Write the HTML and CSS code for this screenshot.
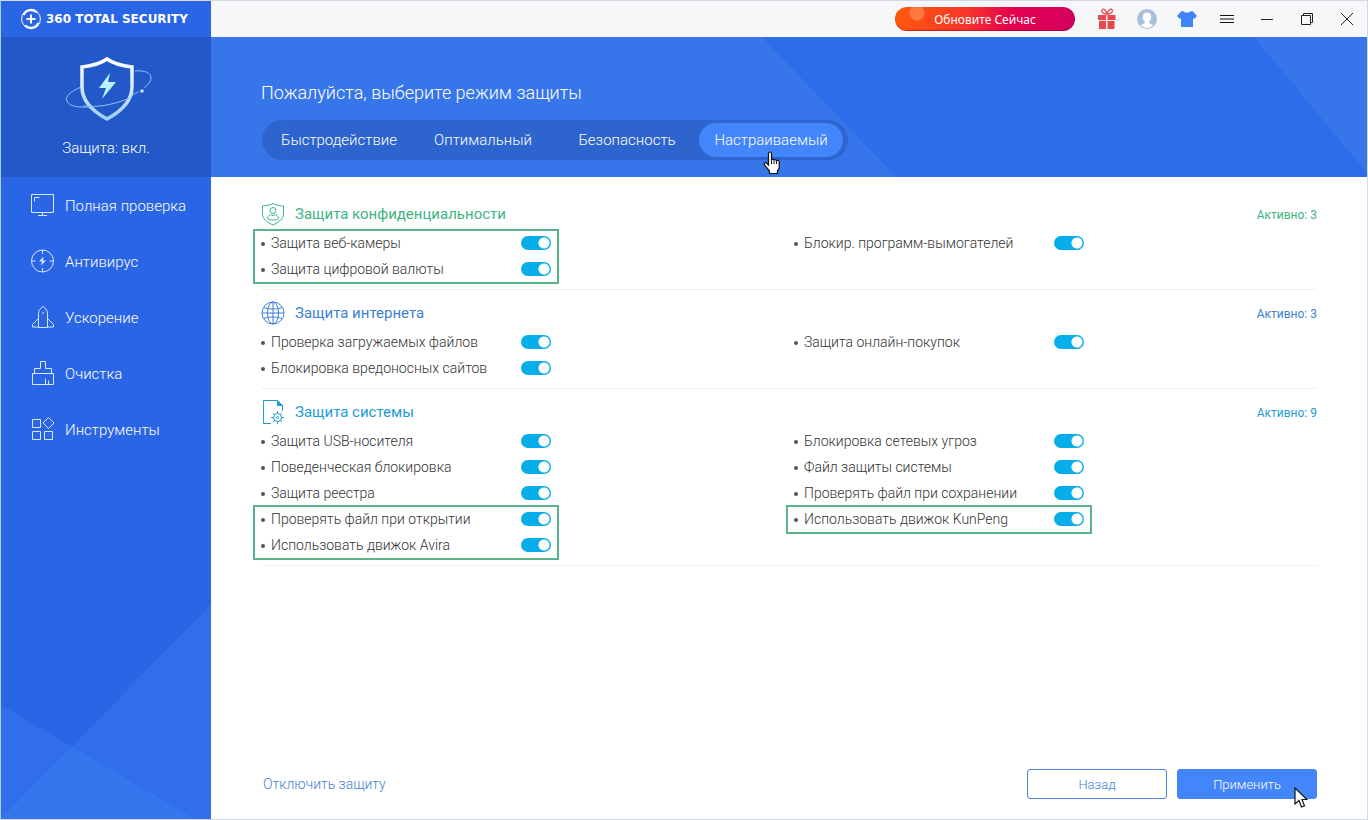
FILE: index.html
```html
<!DOCTYPE html>
<html lang="ru">

<head>
    <meta charset="UTF-8">
    <meta name="viewport" content="width=device-width, initial-scale=1.0">
    <title>360 Total Security</title>
    <link rel="stylesheet" href="styles.css">
</head>

<body>
    <div class="window">
        <aside class="sidebar">
            <div class="brand">
                <svg width="22" height="22" viewBox="0 0 22 22" fill="none" stroke="#fff">
                    <circle cx="11" cy="11" r="9.400" stroke-width="1" />
                    <path d="M3.500 7C6 1.500 13 .5 17 4.500M18.500 15C16 20.500 9 21.500 5 17.500" stroke-width="2.400" />
                    <path d="M11 6.500v9M6.500 11h9" stroke-width="2" />
                </svg>
                <span>360 TOTAL SECURITY</span>
            </div>

            <div class="status">
                <svg width="88" height="68" viewBox="0 0 88 68" fill="none">
                    <defs>
                        <linearGradient id="shieldFill" x1="0" y1="0" x2="0" y2="1">
                            <stop offset="0" stop-color="#ffffff" />
                            <stop offset="1" stop-color="#9fd0ff" />
                        </linearGradient>
                    </defs>
                    <path d="M16 34C5 39 0 43 2 48c3 8 24 8 47 1 20-6 37-16 37-24 0-5-6-8-16-7" stroke="#8fc0fa" stroke-width="1" />
                    <path d="M42 6c7 5 16 7 25 8v20c0 15-12 25-25 32C29 59 17 49 17 34V14c9-1 18-3 25-8z" fill="#2358c9" stroke="url(#shieldFill)" stroke-width="3.500" />
                    <path d="M18 53c18 2 36-3 49-9" stroke="#8fc0fa" stroke-width="1" />
                    <path d="M45 20 34 35h7l-4 11 14-17h-8z" fill="#b9f3ff" />
                    <circle cx="77" cy="38" r="3.500" fill="#2358c9" />
                    <circle cx="77" cy="38" r="1.800" fill="#b9e4ff" />
                </svg>
                <div class="status-text">Защита: вкл.</div>
            </div>

            <nav class="menu">
                <a href="#">
                    <svg class="menu-icon" viewBox="0 0 24 24">
                        <path d="M1.500 1.500h22v18h-22zM4.500 8.500v-4h5M12.500 20v2.500M8 22.500h9" />
                    </svg>
                    <span>Полная проверка</span>
                </a>
                <a href="#">
                    <svg class="menu-icon" viewBox="0 0 24 24">
                        <circle cx="12.500" cy="12" r="11" />
                        <path d="M12.500 1v4M12.500 19v4M1.500 12h4M19.500 12h4" />
                        <path d="M13.500 7.500 9 12.500h3l-1 4 5-5h-3z" fill="#d5e9ff" stroke="none" />
                    </svg>
                    <span>Антивирус</span>
                </a>
                <a href="#">
                    <svg class="menu-icon" viewBox="0 0 24 24">
                        <path d="M8.500 22.500V8.500c0-3 2-5.500 4.500-7 2.500 1.500 4.500 4 4.500 7v14zM8.500 13.500l-6 6v2.500h6M17.500 13.500l6 6v2.500h-6M13 7v2" />
                    </svg>
                    <span>Ускорение</span>
                </a>
                <a href="#">
                    <svg class="menu-icon" viewBox="0 0 24 24">
                        <path d="M2.500 12.500h21v11h-21zM4.500 12.500v-5h6v-7h5v7h6v5M15.500 23.500v-6M18.500 23.500v-4" />
                    </svg>
                    <span>Очистка</span>
                </a>
                <a href="#">
                    <svg class="menu-icon" viewBox="0 0 24 24">
                        <path d="M2.500 2.500h8v8h-8zM2.500 14.500h8v8h-8zM14.500 14.500h8v8h-8zM18.500 .5l5.500 5.500-5.500 5.500L13 6z" />
                    </svg>
                    <span>Инструменты</span>
                </a>
            </nav>

            <svg class="sidebar-bg" width="210" height="220" viewBox="0 0 210 220">
                <path d="M0 220 210 5v215z" />
                <path d="M0 106 194 220H0z" />
            </svg>
        </aside>

        <div class="main">
            <header class="titlebar">
                <button type="button" class="upgrade">Обновите Сейчас</button>
                <button type="button" class="tool" aria-label="Подарок">
                    <svg width="20" height="22" viewBox="0 0 20 22">
                        <path d="M1 7h8v5H1zM10.500 7h8v5h-8zM2 13h7v8H2zM10.500 13h7v8h-7z" fill="#e8474c" />
                        <path d="M10 6C5 6 4 3 5.500 1.500 7.500 0 9 3 10 6c1-3 3-6 5-4.500C16 3 15 6 10 6z" fill="none" stroke="#e8474c" stroke-width="1.300" />
                    </svg>
                </button>
                <button type="button" class="tool" aria-label="Профиль">
                    <svg width="20" height="20" viewBox="0 0 20 20">
                        <circle cx="10" cy="10" r="10" fill="#a9bfdb" />
                        <path d="M10 3.500c3 0 4.200 2 4.200 4.500 0 2-.8 3.500-2 4.500v1.500l4 2C14.500 18 12.500 19 10 19s-4.500-1-6.200-3l4-2v-1.500c-1.200-1-2-2.500-2-4.500 0-2.500 1.200-4.500 4.200-4.500z" fill="#fff" />
                    </svg>
                </button>
                <button type="button" class="tool" aria-label="Темы">
                    <svg width="20" height="18" viewBox="0 0 20 18">
                        <path d="M6 1c1.500 2 6.500 2 8 0l2 .5L20 6l-3 3-1-.8V17H4V8.200L3 9 0 6l4-4.500z" fill="#3f84fb" />
                    </svg>
                </button>
                <button type="button" class="tool" aria-label="Меню">
                    <svg width="14" height="8" viewBox="0 0 14 8"><path d="M0 .5h14M0 4h14M0 7.500h14" stroke="#111" /></svg>
                </button>
                <button type="button" class="tool" aria-label="Свернуть">
                    <svg width="12" height="2" viewBox="0 0 12 2"><path d="M0 1.500h12" stroke="#222" /></svg>
                </button>
                <button type="button" class="tool" aria-label="Развернуть">
                    <svg width="12" height="12" viewBox="0 0 12 12" fill="none" stroke="#222">
                        <path d="M.5 2.500h9v9h-9zM2.500 2.500v-2h9v9h-2" />
                    </svg>
                </button>
                <button type="button" class="tool" aria-label="Закрыть">
                    <svg width="12" height="12" viewBox="0 0 12 12"><path d="M0 0 12 12M12 0 0 12" stroke="#222" /></svg>
                </button>
            </header>

            <section class="banner">
                <svg class="banner-bg" viewBox="0 0 1156 140" preserveAspectRatio="none">
                    <path d="M551 0 685 140h471v-4L1043 0z" />
                </svg>
                <h1>Пожалуйста, выберите режим защиты</h1>
                <div class="modes">
                    <button type="button">Быстродействие</button>
                    <button type="button">Оптимальный</button>
                    <button type="button">Безопасность</button>
                    <button type="button" class="active">
                        Настраиваемый
                        <svg class="hand" width="18" height="24" viewBox="0 0 18 24">
                            <path d="M5.500 14V2.500c0-2 3-2 3 0V9c.5-1.300 2.500-1 2.500.5.500-1.200 2.500-1 2.500.5.700-1 2.700-.7 2.700 1V17l-1.700 3v2.500h-8V20L1.500 14c-1-2 1-3.500 2.500-1.500z" fill="#fff" stroke="#111" stroke-width="1.200" />
                            <path d="M8.500 9v4M11 10v3M13.500 10.500V13" stroke="#111" stroke-width="1" />
                        </svg>
                    </button>
                </div>
            </section>

            <main class="content">
                <section class="group privacy">
                    <div class="group-head">
                        <svg class="group-icon" viewBox="0 0 24 24">
                            <path d="M12 1.500c3 2 7 2 10.500 2.500v8c0 5-5 8.500-10.500 11C6.500 20.500 1.500 17 1.500 12V4C5 3.500 9 3.500 12 1.500z" />
                            <circle cx="12" cy="8.500" r="3" />
                            <path d="M9.500 12.500c-5 3-4 5.500 2.500 5.500s7.500-2.500 2.500-5.500c-1.500 1.300-3.500 1.300-5 0z" />
                        </svg>
                        <h2>Защита конфиденциальности</h2>
                        <span class="count">Активно: 3</span>
                    </div>
                    <div class="columns">
                        <ul>
                            <li class="marked">
                                <label><span>Защита веб-камеры</span><input type="checkbox" checked></label>
                                <label><span>Защита цифровой валюты</span><input type="checkbox" checked></label>
                            </li>
                        </ul>
                        <ul>
                            <li><label><span>Блокир. программ-вымогателей</span><input type="checkbox" checked></label></li>
                        </ul>
                    </div>
                </section>

                <section class="group internet">
                    <div class="group-head">
                        <svg class="group-icon" viewBox="0 0 24 24">
                            <circle cx="12" cy="12" r="11" />
                            <ellipse cx="12" cy="12" rx="5.500" ry="11" />
                            <path d="M12 1v22M1 12h22M3 6.500c5 2 13 2 18 0M3 17.500c5-2 13-2 18 0" />
                        </svg>
                        <h2>Защита интернета</h2>
                        <span class="count">Активно: 3</span>
                    </div>
                    <div class="columns">
                        <ul>
                            <li><label><span>Проверка загружаемых файлов</span><input type="checkbox" checked></label></li>
                            <li><label><span>Блокировка вредоносных сайтов</span><input type="checkbox" checked></label></li>
                        </ul>
                        <ul>
                            <li><label><span>Защита онлайн-покупок</span><input type="checkbox" checked></label></li>
                        </ul>
                    </div>
                </section>

                <section class="group system">
                    <div class="group-head">
                        <svg class="group-icon" viewBox="0 0 24 24">
                            <path d="M10 23.500H2.500V.5h14l5 5V11" />
                            <path d="M16.500 .5v5h5z" fill="currentColor" />
                            <circle cx="16.500" cy="17.500" r="4" />
                            <circle cx="16.500" cy="17.500" r="1" />
                            <path d="M16.500 11v2.500M16.500 21.500V24M10 17.500h2.500M20.500 17.500H23M12 13l1.700 1.700M19.300 20.300 21 22M12 22l1.700-1.700M19.300 14.700 21 13" />
                        </svg>
                        <h2>Защита системы</h2>
                        <span class="count">Активно: 9</span>
                    </div>
                    <div class="columns">
                        <ul>
                            <li><label><span>Защита USB-носителя</span><input type="checkbox" checked></label></li>
                            <li><label><span>Поведенческая блокировка</span><input type="checkbox" checked></label></li>
                            <li><label><span>Защита реестра</span><input type="checkbox" checked></label></li>
                            <li class="marked">
                                <label><span>Проверять файл при открытии</span><input type="checkbox" checked></label>
                                <label><span>Использовать движок Avira</span><input type="checkbox" checked></label>
                            </li>
                        </ul>
                        <ul>
                            <li><label><span>Блокировка сетевых угроз</span><input type="checkbox" checked></label></li>
                            <li><label><span>Файл защиты системы</span><input type="checkbox" checked></label></li>
                            <li><label><span>Проверять файл при сохранении</span><input type="checkbox" checked></label></li>
                            <li class="marked"><label><span>Использовать движок KunPeng</span><input type="checkbox" checked></label></li>
                        </ul>
                    </div>
                </section>
            </main>

            <footer class="footer">
                <a href="#" class="disable">Отключить защиту</a>
                <button type="button" class="btn">Назад</button>
                <button type="button" class="btn btn-primary">
                    Применить
                    <svg class="arrow" width="14" height="22" viewBox="0 0 14 22">
                        <path d="M1 1v16l4-3.500 2.500 6.500 3-1.200L8 12.500h5z" fill="#fff" stroke="#111" stroke-width="1.200" />
                    </svg>
                </button>
            </footer>
        </div>
    </div>
</body>

</html>
```
FILE: styles.css
```css
* {
    box-sizing: border-box;
}

body {
    margin: 0;
    font-family: Roboto, "Liberation Sans", sans-serif;
    font-size: 14px;
    font-weight: 300;
    color: #333;
}

button {
    padding: 0;
    border: none;
    background: none;
    font-family: inherit;
    font-weight: inherit;
    cursor: pointer;
}

a {
    text-decoration: none;
}

.window {
    display: grid;
    grid-template-columns: 210px 1fr;
    min-height: 100vh;
    border: 1px solid #d5d9dd;
    border-left-color: #a9cdf3;
    background-color: #fff;
}

/* sidebar */
.sidebar {
    position: relative;
    background-color: #2965e4;
    color: #fff;
}

.brand {
    display: flex;
    align-items: center;
    gap: 4px;
    height: 36px;
    padding-left: 19px;
    font-family: "DejaVu Sans", sans-serif;
    font-size: 12px;
    font-weight: bold;
    white-space: nowrap;
}

.status {
    display: flex;
    flex-direction: column;
    align-items: center;
    height: 140px;
    padding-top: 16px;
    background-color: #2358c9;
}

.status svg {
    margin-left: 6px;
}

.status-text {
    margin-top: 17px;
    font-size: 15px;
    line-height: 20px;
}

.menu a {
    display: flex;
    align-items: center;
    gap: 11px;
    height: 56px;
    padding-left: 29px;
    color: #fff;
    font-size: 15px;
}

.menu span {
    padding-top: 2px;
}

.menu-icon {
    width: 24px;
    height: 24px;
    fill: none;
    stroke: #d5e9ff;
}

.sidebar-bg {
    position: absolute;
    left: 0;
    bottom: 0;
    fill: #4a90ff;
    fill-opacity: 0.22;
}

/* title bar */
.main {
    display: flex;
    flex-direction: column;
}

.titlebar {
    display: flex;
    align-items: center;
    justify-content: flex-end;
    height: 36px;
    background-color: #f6f7f8;
}

.upgrade {
    width: 180px;
    height: 24px;
    margin-right: 12px;
    border-radius: 12px;
    background: radial-gradient(circle at 22px 6px, #ff7a3c 7px, transparent 8px),
        linear-gradient(100deg, #ff5a0a, #f6352a 40%, #e6004f 65%, #d2005f);
    box-shadow: inset 0 -1px 1px rgba(120, 0, 40, 0.5);
    color: #fff;
    font-family: "Noto Sans", sans-serif;
    font-size: 12px;
    font-weight: normal;
}

.tool {
    display: flex;
    align-items: center;
    justify-content: center;
    width: 40px;
    height: 36px;
}

/* banner */
.banner {
    position: relative;
    height: 140px;
    padding: 46px 50px 0;
    background-color: #3776ea;
    color: #fff;
}

.banner-bg {
    position: absolute;
    top: 0;
    left: 0;
    width: 100%;
    height: 100%;
    fill: #2d6de9;
}

.banner h1 {
    position: relative;
    margin: 0;
    font-size: 18px;
    font-weight: 300;
    line-height: 20px;
}

.modes {
    position: relative;
    display: inline-flex;
    margin: 17px 0 0 1px;
    padding: 3px 5px;
    border-radius: 20px;
    background-color: #2e64cd;
}

.modes button {
    position: relative;
    width: 144px;
    height: 34px;
    border-radius: 17px;
    color: #fff;
    font-size: 15px;
}

.modes .active {
    background-color: #4385fb;
}

.hand {
    position: absolute;
    left: 64px;
    top: 28px;
}

/* protection groups */
.content {
    flex: 1;
    padding: 14px 50px 0;
}

.group {
    padding: 10px 0 7px;
    border-bottom: 1px solid #f0f0f0;
}

.group-head {
    display: flex;
    align-items: center;
    gap: 10px;
    height: 26px;
    margin-bottom: 3px;
}

.group-icon {
    width: 24px;
    height: 24px;
    fill: none;
    stroke: currentColor;
}

.group h2 {
    margin: 0;
    font-size: 15px;
    font-weight: normal;
}

.count {
    margin-left: auto;
    padding-top: 2px;
    font-size: 12px;
    font-weight: normal;
}

.privacy .group-head {
    color: #3db481;
}

.internet .group-head {
    color: #3f7fd2;
}

.system .group-head {
    color: #1d9cd6;
}

.columns {
    display: grid;
    grid-template-columns: 1fr 1fr;
    gap: 10px;
}

.columns ul {
    max-width: 290px;
    margin: 0;
    padding: 0;
    list-style: none;
}

.columns label {
    display: flex;
    align-items: center;
    height: 26px;
    white-space: nowrap;
}

.columns label::before {
    content: "";
    width: 4px;
    height: 4px;
    margin: 2px 6px 0 0;
    border-radius: 50%;
    background-color: #555;
}

.columns input {
    appearance: none;
    width: 30px;
    height: 14px;
    margin: 0 0 0 auto;
    border-radius: 7px;
    background: radial-gradient(circle at 23px 7px, #fff 5px, #08aeea 6px);
}

.marked {
    position: relative;
}

.marked::after {
    content: "";
    position: absolute;
    inset: -1px -8px -2px;
    border: 2px solid #58b58b;
    pointer-events: none;
}

/* footer */
.footer {
    display: flex;
    align-items: center;
    gap: 10px;
    padding: 0 50px 20px;
}

.disable {
    margin: 0 auto 0 2px;
    color: #3f7fd2;
}

.btn {
    position: relative;
    width: 140px;
    height: 30px;
    border: 1px solid #4a84dd;
    border-radius: 3px;
    color: #3f7fd2;
    font-size: 13px;
}

.btn-primary {
    border-color: #4385fb;
    background-color: #4385fb;
    color: #fff;
}

.arrow {
    position: absolute;
    right: 8px;
    bottom: -11px;
}
```
